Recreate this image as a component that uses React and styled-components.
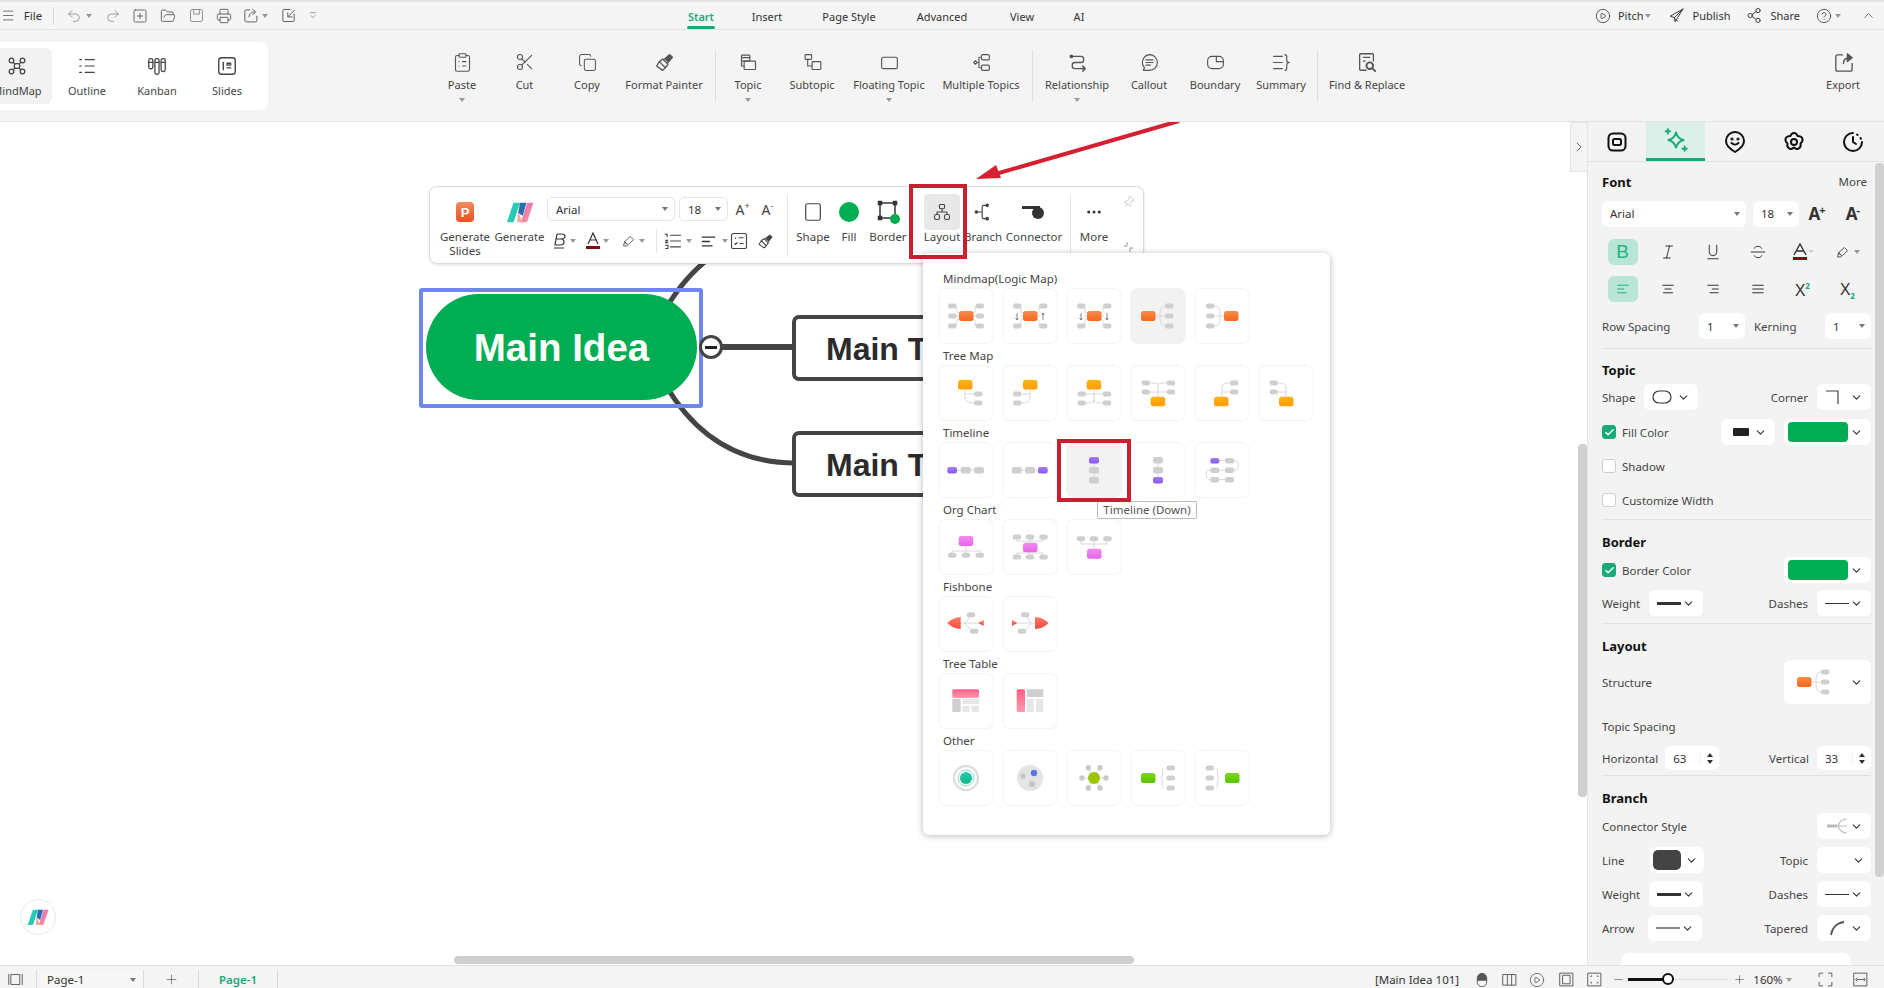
import React from "react";
import styled, { createGlobalStyle } from "styled-components";
import { Undo2, Redo2, SquarePlus, FolderOpen, Printer, CirclePlay, CircleHelp, ChevronUp, ChevronRight, ChevronDown, Scissors, Copy, ClipboardList, Plus, Minus, Check, Pin, Ellipsis } from "lucide-react";

const FONT = `"Noto Sans", "Open Sans", Arial, sans-serif`;
const GREEN = "#1aa97a";
const Global = createGlobalStyle`
  html, body { margin: 0; padding: 0; background: #fff; }
  * { box-sizing: border-box; }
  body { font-family: ${FONT}; font-size: 11.5px; color: #444; }
`;

const Page = styled.div`width:1884px;height:988px;display:flex;flex-direction:column;overflow:hidden;background:#fff;`;

/* ---------- title bar ---------- */
const TitleBar = styled.header`flex:none;height:30px;display:flex;align-items:center;background:#f5f5f5;border-top:2px solid #e3e3e3;border-bottom:1px solid #e4e4e4;`;
const QuickBar = styled.div`width:671px;flex:none;display:flex;align-items:center;color:#555;`;
const Slot = styled.span`flex:none;width:${p=>p.$w||28}px;margin-left:${p=>p.$ml||0}px;display:inline-flex;align-items:center;justify-content:center;color:${p=>p.$c||"#555"};`;
const FileLabel = styled.span`font-size:11.5px;color:#333;width:28px;margin-left:3px;text-align:center;`;
const TinySep = styled.span`flex:none;width:1px;height:18px;background:#d9d9d9;margin:0 ${p=>p.$m||0}px;`;
const Caret = styled.span`display:inline-block;flex:none;width:0;height:0;border-left:3px solid transparent;border-right:3px solid transparent;border-top:4px solid ${p=>p.$c||"#999"};margin-left:${p=>p.$ml||0}px;`;
const Tabs = styled.nav`display:flex;align-items:stretch;height:27px;`;
const Tab = styled.span`width:${p=>p.$w}px;position:relative;display:flex;align-items:center;justify-content:center;padding-top:1px;font-size:11px;color:${p=>p.$on?GREEN:"#333"};font-weight:${p=>p.$on?600:400};
  ${p=>p.$on?`&::after{content:"";position:absolute;left:16px;right:16px;bottom:0;height:3px;border-radius:2px;background:${GREEN};}`:""}`;
const TopRight = styled.div`margin-left:auto;display:flex;align-items:center;padding-right:8px;`;
const TopAction = styled.span`display:flex;align-items:center;gap:${p=>p.$gap||7}px;margin-left:${p=>p.$ml||0}px;font-size:11px;color:#333;`;

/* ---------- ribbon ---------- */
const Ribbon = styled.div`flex:none;height:92px;display:flex;background:#f4f4f4;border-bottom:1px solid #e2e2e2;padding-right:16px;`;
const ViewCard = styled.div`flex:none;width:268px;height:68px;margin-top:12px;background:#fff;border-radius:0 8px 8px 0;display:flex;align-items:center;overflow:hidden;padding-right:6px;`;
const ViewItem = styled.div`flex:none;width:70px;height:56px;margin-left:${p=>p.$ml||0}px;border-radius:6px;background:${p=>p.$on?"#f2f2f2":"transparent"};display:flex;flex-direction:column;align-items:center;justify-content:space-between;padding:7px 0 6px;color:#444;font-size:11px;white-space:nowrap;`;
const RibbonGroup = styled.div`display:flex;margin-left:163px;flex:1;`;
const RibbonItem = styled.div`flex:none;width:${p=>p.$w}px;display:flex;flex-direction:column;align-items:center;padding-top:21px;color:#444;white-space:nowrap;font-size:11px;`;
const RibbonIcon = styled.div`height:22px;display:flex;align-items:center;justify-content:center;color:#555;`;
const RibbonLabel = styled.div`margin-top:4px;line-height:16px;`;
const RibbonCaret = styled.div`margin-top:1px;line-height:8px;`;
const RibbonSep = styled.div`flex:none;width:1px;height:52px;margin:20px ${p=>p.$r||2}px 0 ${p=>p.$l||2}px;background:#dedede;`;
const Push = styled.div`flex:1;`;

/* ---------- main ---------- */
const Main = styled.div`flex:1;min-height:0;display:flex;`;
const Canvas = styled.main`flex:1;position:relative;overflow:hidden;background:#fff;`;
const Links = styled.svg`position:absolute;left:0;top:0;`;
const Pill = styled.div`position:absolute;left:426px;top:172px;width:271px;height:106px;padding-top:2px;border-radius:53px;background:#00ad52;display:flex;align-items:center;justify-content:center;color:#fff;font:bold 38.5px "Liberation Sans",Arial,sans-serif;`;
const Selection = styled.div`position:absolute;left:419px;top:166px;width:284px;height:120px;border:4px solid #6d87ee;border-radius:3px;`;
const TopicNode = styled.div`position:absolute;left:792px;top:${p=>p.$top}px;width:260px;height:${p=>p.$h||65}px;border:4px solid #444;border-radius:7px;background:#fff;display:flex;align-items:center;padding:2px 0 0 30px;color:#2b2b2b;font:bold 32px "Liberation Sans",Arial,sans-serif;white-space:nowrap;`;
const Collapse = styled.div`position:absolute;left:699px;top:213px;width:24px;height:24px;border:3.5px solid #444;border-radius:50%;background:#fff;display:flex;align-items:center;justify-content:center;&::after{content:"";width:12px;height:3px;background:#222;}`;

const Toolbar = styled.div`position:absolute;left:429px;top:64px;width:715px;height:78px;background:#fff;border:1px solid #dcdcdc;border-radius:8px;box-shadow:0 1px 3px rgba(0,0,0,.12);display:flex;padding:7px 0 0 6px;`;
const ToolItem = styled.div`flex:none;width:${p=>p.$w}px;margin-left:${p=>p.$ml||0}px;display:flex;flex-direction:column;align-items:center;text-align:center;color:#444;font-size:11.5px;line-height:14px;white-space:nowrap;`;
const ToolIcon = styled.div`width:36px;height:36px;flex:none;display:flex;align-items:center;justify-content:center;border-radius:4px;background:${p=>p.$on?"#e8e8e8":"transparent"};color:#444;`;
const FontCol = styled.div`flex:none;width:238px;margin-left:2px;padding-top:3px;display:flex;flex-direction:column;gap:8px;`;
const FontRow = styled.div`display:flex;align-items:center;height:24px;`;
const ToolSelect = styled.div`flex:none;width:${p=>p.$w}px;margin-right:${p=>p.$mr||0}px;height:24px;border:1px solid #e6e6e6;border-radius:5px;display:flex;align-items:center;justify-content:space-between;padding:0 6px 0 8px;font-size:11.5px;color:#333;`;
const MiniGlyph = styled.span`flex:none;width:${p=>p.$w}px;margin-left:${p=>p.$ml||0}px;display:inline-flex;align-items:center;justify-content:center;gap:3px;color:#444;`;
const SuperA = styled.span`flex:none;width:25px;text-align:center;font-size:14px;color:#444;& sup{font-size:9px;line-height:0;}`;
const BigA = styled.span`flex:none;width:${p=>p.$w}px;display:inline-flex;align-items:flex-start;justify-content:center;font-size:17px;font-weight:700;line-height:20px;color:#333;& sup{font-size:11px;line-height:12px;margin-left:-1px;}`;
const ToolSep = styled.div`flex:none;width:1px;height:${p=>p.$h||60}px;margin:${p=>p.$mt||1}px ${p=>p.$r||2}px 0 ${p=>p.$l||2}px;background:#e3e3e3;`;
const RowSep = styled.span`flex:none;width:1px;height:24px;background:#e3e3e3;margin-left:${p=>p.$m||3}px;`;
const PinMark = styled.div`position:absolute;right:8px;top:9px;color:#bbb;& svg{transform:rotate(35deg);}`;
const ResizeMark = styled.div`position:absolute;right:9px;bottom:11px;color:#999;line-height:0;`;

const Popover = styled.section`position:absolute;left:923px;top:131px;width:407px;height:582px;background:#fff;border-radius:6px;box-shadow:0 1px 7px rgba(0,0,0,.28);padding:16px 0 0 15px;`;
const SectionTitle = styled.div`height:19px;line-height:19px;margin-left:5px;font-size:11.5px;color:#444;`;
const TileRow = styled.div`display:flex;gap:8px;margin-bottom:2px;`;
const Tile = styled.div`flex:none;width:56px;height:56px;border-radius:8px;border:1px solid ${p=>p.$on?"#f2f2f2":"#f4f4f4"};background:${p=>p.$on?"#f2f2f2":"#fff"};& svg{display:block;margin:-1px;}`;
const RedBox = styled.div`position:absolute;left:${p=>p.$l}px;top:${p=>p.$t}px;width:${p=>p.$w}px;height:${p=>p.$h}px;border:4px solid #c8202f;`;
const Tooltip = styled.div`position:absolute;left:1097px;top:379px;width:100px;height:18px;background:#fff;border:1px solid #bdbdbd;border-radius:1px;font-size:11.5px;line-height:16px;text-align:center;color:#555;white-space:nowrap;`;
const ArrowSvg = styled.svg`position:absolute;left:960px;top:-4px;`;
const LogoBubble = styled.div`position:absolute;left:20px;top:777px;width:36px;height:36px;border:1px solid #ebebeb;border-radius:50%;background:#fff;display:flex;align-items:center;justify-content:center;`;
const SideToggle = styled.div`position:absolute;right:0;top:0;width:17px;height:50px;background:#f4f4f4;border:1px solid #e6e6e6;border-right:0;display:flex;align-items:center;justify-content:center;color:#555;`;
const VThumb = styled.div`position:absolute;right:0;top:322px;width:9px;height:353px;background:#d0d0d0;border-radius:4px;`;
const HThumb = styled.div`position:absolute;left:454px;top:834px;width:680px;height:8px;background:#cfcfcf;border-radius:4px;`;
const HiddenDefs = styled.svg`position:absolute;width:0;height:0;`;

/* ---------- right panel ---------- */
const Panel = styled.aside`flex:none;width:297px;position:relative;background:#f3f3f3;border-left:1px solid #e4e4e4;display:flex;flex-direction:column;overflow:hidden;`;
const PanelTabs = styled.div`flex:none;height:40px;display:flex;margin-left:-1px;border-bottom:1px solid #e2e2e2;`;
const PanelTab = styled.div`flex:none;width:${p=>p.$w}px;display:flex;align-items:center;justify-content:center;background:${p=>p.$on?"#dcefe9":"transparent"};border-bottom:${p=>p.$on?`3px solid ${GREEN}`:"0"};`;
const PanelBody = styled.div`flex:1;padding:0 0 0 14px;width:283px;overflow:hidden;`;
const PanelThumb = styled.div`position:absolute;right:0;top:41px;width:9px;height:714px;background:#d0d0d0;border-radius:4px;`;
const Heading = styled.div`height:18px;line-height:20px;margin-top:${p=>p.$mt||0}px;display:flex;justify-content:space-between;font-size:13px;font-weight:700;color:#111;`;
const More = styled.span`font-size:11.5px;font-weight:400;color:#444;margin-right:4px;`;
const Row = styled.div`height:${p=>p.$h||26}px;margin-top:${p=>p.$mt||0}px;display:flex;align-items:center;justify-content:space-between;font-size:11.5px;color:#444;white-space:nowrap;`;
const RowSide = styled.div`display:flex;align-items:center;gap:${p=>p.$gap||6}px;`;
const Field = styled.div`flex:none;width:${p=>p.$w}px;height:${p=>p.$h||26}px;margin-left:${p=>p.$ml||0}px;background:#fff;border-radius:6px;display:flex;align-items:center;justify-content:space-between;padding:0 ${p=>p.$pr||8}px 0 ${p=>p.$pl||8}px;font-size:11.5px;color:#333;`;
const Swatch = styled.span`flex:none;width:${p=>p.$w}px;height:${p=>p.$h}px;border-radius:${p=>p.$r||4}px;background:${p=>p.$c};`;
const LineSample = styled.span`flex:none;width:24px;height:${p=>p.$t}px;background:${p=>p.$c||"#333"};`;
const FormatGrid = styled.div`display:grid;grid-template-columns:repeat(6,45px);margin:${p=>p.$mt||0}px 0 0 -2px;height:26px;`;
const FormatBtn = styled.div`justify-self:center;width:30px;height:26px;border-radius:6px;background:${p=>p.$on?"#b9e5d6":"transparent"};display:flex;align-items:center;justify-content:center;color:${p=>p.$on?"#23b384":"#333"};`;
const BoldB = styled.span`font:19px "Liberation Sans",Arial,sans-serif;`;
const Script = styled.span`font-size:17px;& sup,& sub{font-size:8px;font-weight:700;color:${GREEN};}`;
const Rule = styled.div`height:1px;background:#e0e0e0;margin-top:${p=>p.$mt||0}px;`;
const Box = styled.span`flex:none;width:14px;height:14px;border-radius:3px;display:inline-flex;align-items:center;justify-content:center;background:${p=>p.$on?GREEN:"#fff"};border:1px solid ${p=>p.$on?GREEN:"#cfcfcf"};color:#fff;`;
const Spinner = styled.span`display:flex;flex-direction:column;gap:3px;padding-left:6px;border-left:1px solid #eee;`;
const SpinUp = styled.i`display:block;width:0;height:0;border-left:3px solid transparent;border-right:3px solid transparent;border-bottom:4px solid #333;`;
const SpinDown = styled.i`display:block;width:0;height:0;border-left:3px solid transparent;border-right:3px solid transparent;border-top:4px solid #333;`;
const PreviewCard = styled.div`width:230px;height:40px;margin:12px 0 0 19px;background:#fff;border-radius:8px 8px 0 0;`;

/* ---------- status bar ---------- */
const StatusBar = styled.footer`flex:none;height:23px;display:flex;align-items:stretch;background:#f4f4f4;border-top:1px solid #e0e0e0;font-size:11.5px;color:#333;overflow:hidden;padding-right:10px;`;
const StatusSlot = styled.div`flex:none;width:${p=>p.$w}px;margin-left:${p=>p.$ml||0}px;display:flex;align-items:center;justify-content:center;padding-top:5px;color:#555;`;
const StatusSep = styled.div`flex:none;width:1px;margin-top:4px;margin-left:${p=>p.$ml||0}px;background:#d9d9d9;`;
const PageTab = styled.div`flex:none;width:103px;margin-left:3px;margin-top:4px;padding:1px 7px 0;display:flex;align-items:center;justify-content:space-between;background:#f7f7f7;color:#333;font-size:11.5px;`;
const ActivePage = styled.div`flex:none;width:78px;display:flex;align-items:center;justify-content:center;padding-top:5px;color:${GREEN};font-weight:600;font-size:11.5px;`;
const StatusText = styled.div`flex:none;width:${p=>p.$w}px;margin-left:${p=>p.$ml||0}px;padding-top:5px;display:flex;align-items:center;justify-content:center;white-space:nowrap;`;
const Slider = styled.div`flex:none;width:100px;position:relative;margin-top:5px;`;
const SliderTrack = styled.div`position:absolute;left:0;right:0;top:8px;height:1px;background:#dcdcdc;`;
const SliderFill = styled.div`position:absolute;left:0;top:7px;width:40px;height:3px;background:#111;`;
const SliderKnob = styled.div`position:absolute;left:34px;top:2px;width:12px;height:12px;border:2.5px solid #111;border-radius:50%;background:#fff;`;

/* ---------- drawn icons ---------- */
const Ico = ({ s = 20, sw = 1.3, c = "currentColor", children }) => (
  <svg width={s} height={s} viewBox="0 0 24 24" fill="none" stroke={c} strokeWidth={sw} strokeLinecap="round" strokeLinejoin="round">{children}</svg>
);
const Hamburger = () => <Ico s={15}><path d="M4 5h15M4 12h15M4 19h15" /></Ico>;
const SaveIco = () => <Ico s={17} c="#888"><rect x="3.5" y="3.5" width="17" height="17" rx="2.5" /><path d="M8 3.5V10h8V3.5" /></Ico>;
const ShareBox = () => <Ico s={17}><path d="M11 4H6a2 2 0 0 0-2 2v13a2 2 0 0 0 2 2h13a2 2 0 0 0 2-2v-6" /><path d="M10 14c0-5 3-7 8-7M15 3l4 4-4 4" /></Ico>;
const CheckBoxOut = () => <Ico s={17}><path d="M20 10v9a1.5 1.5 0 0 1-1.5 1.5h-13A1.5 1.5 0 0 1 4 19V5a1.5 1.5 0 0 1 1.5-1.5H14" /><path d="M20 5l-8 8M11 8v6h6" /></Ico>;
const Overflow = () => <Ico s={12}><path d="M6 4h12M7 11l5 5 5-5" /></Ico>;
const Plane = () => <Ico s={17}><path d="M21 3L3 13l6 2 1 6 11-18zM9 15l12-12M14 20l-4-3" /></Ico>;
const ShareNodes = () => <Ico s={17}><circle cx="6" cy="12" r="3" /><circle cx="17" cy="5" r="3" /><circle cx="17" cy="19" r="3" /><path d="M8.7 10.6l5.6-4M8.7 13.4l5.6 4" /></Ico>;

const MindIco = () => <Ico s={22} sw={1.4}><circle cx="6" cy="6" r="2.5"/><circle cx="18" cy="6" r="2.5"/><circle cx="6" cy="18" r="2.5"/><circle cx="18" cy="18" r="2.5"/><rect x="9" y="9.5" width="6" height="5" rx="2"/><path d="M8 8l1.5 2M16 8l-1.5 2M8 16l1.5-2M16 16l-1.5-2"/></Ico>;
const OutlineIco = () => <Ico s={22}><path d="M4 5h2M10 5h10M4 12h2M10 12h10M4 19h2M10 19h10"/></Ico>;
const KanbanIco = () => <Ico s={22} sw={1.4}><rect x="3" y="4" width="4.5" height="11" rx="2"/><rect x="9.7" y="4" width="4.5" height="17" rx="2"/><rect x="16.5" y="4" width="4.5" height="14" rx="2"/><path d="M3 8h4.5M9.7 8h4.5M16.5 8H21"/></Ico>;
const SlidesIco = () => <Ico s={22} sw={1.5}><rect x="3" y="3" width="18" height="18" rx="3"/><path d="M8 8v8" /><path d="M12 9h4v2h-4zM12 14h4" /></Ico>;
const BrushIco = ({ s = 21 }) => <Ico s={s} sw={1.5}><path d="M6 11l7 7-3 3-7-5zM6 11l4-3 6 6-3 4" /><path d="M12 8l6-5 3 3-5 6" fill="currentColor" /></Ico>;
const TopicIco = () => <Ico s={21}><rect x="4" y="3.500" width="9.500" height="7" rx="1" /><path d="M4 6.500h9.500M4 6.500V16h3" /><rect x="7" y="10.500" width="13" height="9.500" rx="1" /></Ico>;
const SubtopicIco = () => <Ico s={21}><rect x="3.5" y="3" width="7.5" height="5.5" rx="1"/><path d="M6.5 8.5V16h5"/><rect x="11.5" y="11" width="10" height="9" rx="1"/></Ico>;
const FloatIco = () => <Ico s={21}><rect x="3" y="6" width="18" height="13" rx="2"/></Ico>;
const MultiIco = () => <Ico s={21}><rect x="12" y="3" width="9" height="6" rx="1.5"/><rect x="12" y="15" width="9" height="6" rx="1.5"/><path d="M12 6h-2a1 1 0 0 0-1 1v10a1 1 0 0 0 1 1h2M9 12H7"/><path d="M3 12l2-2 2 2-2 2z"/></Ico>;
const RelIco = () => <Ico s={21} sw={1.5}><circle cx="5" cy="5" r="1.4" fill="currentColor"/><path d="M7 5h9a3 3 0 0 1 3 3v1a3 3 0 0 1-3 3H9a3 3 0 0 0-3 3v1a3 3 0 0 0 3 3h10"/><path d="M18 16l3 3-3 3" fill="currentColor"/></Ico>;
const CalloutIco = () => <Ico s={21}><path d="M12 3a9 9 0 0 1 0 18H5l1.3-3A9 9 0 0 1 12 3z"/><path d="M8 9h8M8 12h8M8 15h5"/></Ico>;
const BoundaryIco = () => <Ico s={21}><rect x="3" y="5" width="18" height="14" rx="5"/><path d="M13 5v6h8"/></Ico>;
const SummaryIco = () => <Ico s={21}><path d="M3 5h10M3 12h10M3 19h10M16 3c2 0 2 1 2 3v3c0 2 1 3 3 3-2 0-3 1-3 3v3c0 2 0 3-2 3"/></Ico>;
const FindIco = () => <Ico s={22} sw={1.4}><path d="M11 21H5a1 1 0 0 1-1-1V4a1 1 0 0 1 1-1h13a1 1 0 0 1 1 1v7"/><path d="M8 7h7M8 11h2"/><circle cx="15" cy="16" r="3.6" strokeWidth="2"/><path d="M18 19l3 3" strokeWidth="2"/></Ico>;
const ExportIco = () => <Ico s={23} sw={1.4}><path d="M11 4H6a2 2 0 0 0-2 2v13a2 2 0 0 0 2 2h13a2 2 0 0 0 2-2v-6"/><path d="M12 13c0-4 2-6 7-6" /><path d="M16 3l5 4-5 4z" fill="currentColor"/></Ico>;

const LogoM = ({ s = 26 }) => (
  <svg width={s} height={s} viewBox="0 0 30 30">
    <defs>
      <linearGradient id={`lg-${s}`} x1="0" y1="0" x2="1" y2="1"><stop offset="0" stopColor="#1fd5c9" /><stop offset="1" stopColor="#29c3a0" /></linearGradient>
      <linearGradient id={`lp-${s}`} x1="0" y1="0" x2="1" y2="1"><stop offset="0" stopColor="#ee4fb4" /><stop offset="1" stopColor="#f3b49a" /></linearGradient>
    </defs>
    <path d="M8 5h7L8 26H1z" fill={`url(#lg-${s})`} />
    <path d="M15 5h7l-4 14-5-3z" fill="#2b6fb0" />
    <path d="M23 5h6.500l-7 21H16z" fill={`url(#lp-${s})`} />
    <path d="M13 15l5 11h-6z" fill="#f3a8a0" />
  </svg>
);

const TabFrame = () => <Ico s={24} sw={2} c="#111"><rect x="3.5" y="3.5" width="17" height="17" rx="4.5"/><rect x="8" y="9" width="8" height="6" rx="1.5"/></Ico>;
const TabSpark = () => <Ico s={26} sw={1.8} c={GREEN}><path d="M12 5c1 4 3 6 7 7-4 1-6 3-7 7-1-4-3-6-7-7 4-1 6-3 7-7z"/><path d="M4.5 2v4M2.5 4h4M20 18v4M18 20h4"/></Ico>;
const TabFace = () => <Ico s={24} sw={2} c="#111"><path d="M12 22c-5-3-9-6-9-11a9 9 0 0 1 18 0c0 5-4 8-9 11z"/><circle cx="9" cy="9" r=".6" fill="#111"/><circle cx="15" cy="9" r=".6" fill="#111"/><path d="M8.5 13c2 2 5 2 7 0"/></Ico>;
const TabFlower = () => <Ico s={24} sw={2} c="#111"><path d="M12 3c2 0 3 1.5 3.5 3 2 0 4.5 1 5 3 .4 2-.8 3.5-2 4.5.5 2 0 4-1.8 5-2 1-3.700 0-4.700-1-1 1-2.700 2-4.700 1-1.800-1-2.300-3-1.800-5-1.200-1-2.400-2.500-2-4.500.5-2 3-3 5-3C9 4.500 10 3 12 3z"/><circle cx="12" cy="12" r="3"/></Ico>;
const TabClock = () => <Ico s={24} sw={2} c="#111"><path d="M12 3a9 9 0 1 0 9 9" /><path d="M16 4.500l.6.4M19.500 8l.4.8M12 7v5l3 2" /></Ico>;
const Italic = () => <Ico s={18}><path d="M9 4h9M6 20h9M14 4l-4 16"/></Ico>;
const AlignIco = ({ k, c = "#333", s = 18 }) => {
  const d = { l: "M5 7h14M5 12h8M5 17h11", c: "M5 7h14M8 12h8M6 17h12", r: "M5 7h14M11 12h8M8 17h11", j: "M5 7h14M5 12h14M5 17h14" }[k];
  return <Ico s={s} sw={1.6} c={c}><path d={d} /></Ico>;
};
const Highlighter = () => <Ico s={15}><path d="M8 15l-2-3L15 4l5 5-8 8-4-2z"/><path d="M6 12l-2 7h6"/></Ico>;
const Chevron = () => <ChevronDown size={13} strokeWidth={2} color="#333" />;

/* ---------- layout thumbnails ---------- */
const G = "#cfcfcf", W = "#e6e6e6", LN = "#d8d8d8";
const g = (x, cy, w = 8.4) => [x, cy - 2.5, w, 5, G];
const Defs = () => (
  <HiddenDefs>
    <defs>
      {[["gO","#f98e48","#f2671d"],["gY","#ffb01f","#ff9d00"],["gV","#a47bf5","#8858ea"],["gK","#f18bf2","#e765e8"],["gR","#ff7a68","#fb4a3c"],["gP","#ff5f84","#ff9aae"],["gL","#7ad71a","#59c400"],["gT","#24c9b4","#12b98a"]].map(([id,a,b]) => (
        <linearGradient key={id} id={id} x1="0" y1="0" x2="0" y2="1"><stop offset="0" stopColor={a}/><stop offset="1" stopColor={b}/></linearGradient>
      ))}
    </defs>
  </HiddenDefs>
);
const Mini = ({ d, s = 56, vb = "0 0 56 56" }) => (
  <svg width={s} height={s} viewBox={vb} fill="none">
    {(d.l || []).map((p, i) => <path key={i} d={p} stroke={LN} strokeWidth="1" />)}
    {(d.c || []).map(([x, y, r, f, st, sw], i) => <circle key={i} cx={x} cy={y} r={r} fill={f} stroke={st} strokeWidth={sw} />)}
    {(d.r || []).map(([x, y, w, h, f, rx], i) => <rect key={i} x={x} y={y} width={w} height={h} rx={rx ?? 2} fill={f} />)}
    {(d.p || []).map(([p, f], i) => <path key={i} d={p} fill={f} />)}
    {(d.a || []).map((p, i) => <path key={i} d={p} stroke="#777" strokeWidth=".9" />)}
  </svg>
);
const O = "url(#gO)", Y = "url(#gY)", V = "url(#gV)", K = "url(#gK)", R = "url(#gR)", P = "url(#gP)", LG = "url(#gL)", T = "url(#gT)";
const mapL = ["M21 25c-3 0-2-7-3-7M21 28h-3M21 31c-3 0-2 7-3 7M35 25c3 0 2-7 3-7M35 28h3M35 31c3 0 2 7 3 7"];
const rightTree = { l: ["M25 28h10M30 28c0-4 0-10 5-10M30 28c0 4 0 10 5 10"], r: [[11, 23, 14.5, 10, O, 2.5], g(35,18), g(35,28), g(35,38)] };
const SECTIONS = [
  { t: "Mindmap(Logic Map)", on: 3, items: [
    { l: mapL, r: [g(10,18),g(10,28),g(10,38),g(37.600,18),g(37.600,28),g(37.600,38),[21,23,14.5,10,O,2.5]] },
    { l: mapL, r: [g(11,18),g(11,38),g(37,18),g(37,38),[21,23,14.5,10,O,2.5]], a: ["M15 25v7M13.500 30l1.500 2 1.500-2M41 32v-7M39.500 27l1.500-2 1.500 2"] },
    { l: mapL, r: [g(11,18),g(11,38),g(37,18),g(37,38),[21,23,14.5,10,O,2.5]], a: ["M15 25v7M13.500 30l1.500 2 1.500-2M41 25v7M39.500 30l1.500 2 1.500-2"] },
    rightTree,
    { l: ["M21 28h9M26 28c0-4 0-10-5-10M26 28c0 4 0 10-5 10"], r: [g(12,18),g(12,28),g(12,38),[30,23,14.5,10,O,2.5]] },
  ]},
  { t: "Tree Map", items: [
    { l: ["M27 25v8c0 4 3 5 9 5M27 28c0 1 4 1 9 1"], r: [[20,15,14.5,9.500,Y,2.5],g(36,29),g(36,38)] },
    { l: ["M28 25v8c0 4-3 5-8 5M28 29h-8"], r: [[21,15,14.5,9.500,Y,2.5],g(11,29),g(11,38)] },
    { l: ["M28 25v13M28 29h-8M28 29h9M28 34c0 4-4 4-8 4M28 34c0 4 4 4 9 4"], r: [[20.700,15,14.5,9.500,Y,2.5],g(11.500,29),g(11.500,38),g(36.700,29),g(36.700,38)] },
    { l: ["M28 32V20c0-2-4-2-8-2M28 20c0-2 4-2 9-2M28 27h-8M28 27h9"], r: [g(11.500,18),g(11.500,27),g(36.700,18),g(36.700,27),[20.700,31.700,14.500,9.500,Y,2.5]] },
    { l: ["M28 32V22c0-3 3-4 8-4M28 27h8"], r: [g(36,18),g(36,27),[20,31.700,14.500,9.500,Y,2.5]] },
    { l: ["M28 32V22c0-3-3-4-8-4M28 27h-8"], r: [g(11.500,18),g(11.500,27),[21,31.700,14.500,9.500,Y,2.5]] },
  ]},
  { t: "Timeline", on: 2, items: [
    { l: ["M19 28h18"], r: [[9.300,25,9.700,6.500,V],[22.700,25,10,6.500,G],[36,25,10,6.500,G]] },
    { l: ["M19 28h18"], r: [[9.700,25,10,6.500,G],[23,25,10,6.500,G],[36,25,9.700,6.500,V]] },
    { l: ["M28 20v18"], r: [[23,15,10,6.500,V],[23,25,10,6.500,G],[23,35,10,6.500,G]] },
    { l: ["M28 20v18"], r: [[23,15,10,6.500,G],[23,25,10,6.500,G],[23,35,10,6.500,V]] },
    { l: ["M25 18.700h6M40 18.700c6 0 6 9.600 0 9.600M25 28.300h6M16 28.300c-5 0-5 9.300 0 9.300M25 37.600h6"], r: [[16.300,16,9,5.500,V],[31,16,9,5.500,G],[16.300,25.500,9,5.500,G],[31,25.500,9,5.500,G],[16.300,35,9,5.500,G],[31,35,9,5.500,G]] },
  ]},
  { t: "Org Chart", items: [
    { l: ["M28 27v5M14 34v-2h28v2M28 32v2"], r: [[20.700,17,14.500,10,K,2.5],g(10,36.300),g(23.800,36.300),g(37.500,36.300)] },
    { l: ["M28 20v18M15 20v2h26v-2M15 36v-2h26v2"], r: [g(10.700,18),g(23.800,18),g(37.300,18),[21,23.700,14.500,9.500,K,2.500],g(10.700,38),g(23.800,38),g(37.300,38)] },
    { l: ["M28 22v8M15 22v3h26v-3"], r: [g(10.700,19.700),g(23.800,19.700),g(37.300,19.700),[21,29.700,14.500,10,K,2.500]] },
  ]},
  { t: "Fishbone", items: [
    { l: ["M22 27h19M27 27l6-7M27 27l6 7"], r: [g(28.700,18.700),g(32,35.300)], p: [["M22.700 21v12C18 33 12 30 9.300 27 12 24 18 21 22.700 21z",R],["M45.700 24v6L40 27z",R]] },
    { l: ["M15 27h19M29 27l-5-7M29 27l-5 7"], r: [g(19,18.700),g(15.700,35.300)], p: [["M33 21v12c5 0 11-3 13.500-6C44 24 38 21 33 21z",R],["M10 24v6l5.500-3z",R]] },
  ]},
  { t: "Tree Table", items: [
    { r: [[14.300,16.300,26.700,8.700,P,1.5],[14.300,26,8.400,13,G,1],[24.500,26,16.500,5,W,0],[24.500,33,7,6,W,0],[33.500,33,7.500,6,W,0]] },
    { r: [[14.700,16.300,8.300,22.700,P,1.5],[24.700,16.300,16.600,7.700,G,1],[24.700,26,7,13,W,0],[34,26,7.300,13,W,0]] },
  ]},
  { t: "Other", items: [
    { c: [[28,28,12,"#fff","#dfdfdf",2.5],[28,28,8,"#fff","#8fdcc8",1],[28,28,6,T,"none"]] },
    { c: [[28,28,13,"#e4e4e4"],[32,23,3.200,"#5b78e8"],[21,26,2.700,"#c4c4c4"],[30,34,3,"#c4c4c4"]] },
    { l: ["M16 28h24M22 18l12 20M34 18L22 38"], c: [[22.300,17.700,2.700,"#c8c8c8"],[34,17.700,2.700,"#c8c8c8"],[16,28,2.700,"#c8c8c8"],[40,28,2.700,"#c8c8c8"],[22.300,38,2.700,"#c8c8c8"],[34,38,2.700,"#c8c8c8"],[28,28,6,"#9cc400"]] },
    { l: ["M34 18c-2 0-1.500 3-1.500 6 0 3-2 4-2 4s2 1 2 4c0 3-.5 6 1.500 6"], r: [[11,23,14.500,10,LG,2.500],g(36.500,18),g(36.500,28),g(36.500,38)] },
    { l: ["M22 18c2 0 1.500 3 1.500 6 0 3 2 4 2 4s-2 1-2 4c0 3 .5 6-1.500 6"], r: [g(11.500,18),g(11.500,28),g(11.500,38),[31,23,14.500,10,LG,2.500]] },
  ]},
];

const RibbonEntry = ({ w, label, icon, caret }) => (
  <RibbonItem $w={w}>
    <RibbonIcon>{icon}</RibbonIcon>
    <RibbonLabel>{label}</RibbonLabel>
    {caret && <RibbonCaret><Caret /></RibbonCaret>}
  </RibbonItem>
);
const Tool = ({ w, ml, label, icon, on }) => (
  <ToolItem $w={w} $ml={ml}><ToolIcon $on={on}>{icon}</ToolIcon><div>{label}</div></ToolItem>
);
const Sel = ({ w, h, ml, pl, pr, children, caret }) => (
  <Field $w={w} $h={h} $ml={ml} $pl={pl} $pr={pr}>{children}{caret ? <Caret $c="#777" /> : <Chevron />}</Field>
);

export default function App() {
  return (
    <Page>
      <Global />
      <Defs />
      <TitleBar>
        <QuickBar>
          <Slot $w={16}><Hamburger /></Slot>
          <FileLabel>File</FileLabel>
          <TinySep $m={6} />
          <Slot $w={26} $ml={1}><Undo2 size={16} strokeWidth={1.2} color="#888" /></Slot>
          <Caret $ml={-1} />
          <Slot $w={26} $ml={8}><Redo2 size={16} strokeWidth={1.2} color="#888" /></Slot>
          <Slot $w={28}><SquarePlus size={16} strokeWidth={1.3} /></Slot>
          <Slot $w={28}><FolderOpen size={16} strokeWidth={1.3} /></Slot>
          <Slot $w={28}><SaveIco /></Slot>
          <Slot $w={28}><Printer size={16} strokeWidth={1.3} /></Slot>
          <Slot $w={24}><ShareBox /></Slot>
          <Caret />
          <Slot $w={40}><CheckBoxOut /></Slot>
          <Slot $w={10}><Overflow /></Slot>
        </QuickBar>
        <Tabs>
          <Tab $w={60} $on>Start</Tab>
          <Tab $w={72}>Insert</Tab>
          <Tab $w={92}>Page Style</Tab>
          <Tab $w={94}>Advanced</Tab>
          <Tab $w={66}>View</Tab>
          <Tab $w={48}>AI</Tab>
        </Tabs>
        <TopRight>
          <TopAction><CirclePlay size={16} strokeWidth={1.2} />Pitch<Caret $ml={-5} /></TopAction>
          <TopAction $ml={17}><Plane />Publish</TopAction>
          <TopAction $ml={16}><ShareNodes />Share</TopAction>
          <TopAction $ml={16} $gap={3}><CircleHelp size={16} strokeWidth={1.2} /><Caret /></TopAction>
          <TopAction $ml={20}><ChevronUp size={15} strokeWidth={1.1} /></TopAction>
        </TopRight>
      </TitleBar>

      <Ribbon>
        <ViewCard>
          <ViewItem $on $ml={-18}><MindIco />MindMap</ViewItem>
          <ViewItem><OutlineIco />Outline</ViewItem>
          <ViewItem><KanbanIco />Kanban</ViewItem>
          <ViewItem><SlidesIco />Slides</ViewItem>
        </ViewCard>
        <RibbonGroup>
          <RibbonEntry w={62} label="Paste" caret icon={<ClipboardList size={21} strokeWidth={1.3} />} />
          <RibbonEntry w={63} label="Cut" icon={<Scissors size={20} strokeWidth={1.3} />} />
          <RibbonEntry w={62} label="Copy" icon={<Copy size={19} strokeWidth={1.3} />} />
          <RibbonEntry w={92} label="Format Painter" icon={<BrushIco />} />
          <RibbonSep $l={5} $r={2} />
          <RibbonEntry w={60} label="Topic" caret icon={<TopicIco />} />
          <RibbonEntry w={68} label="Subtopic" icon={<SubtopicIco />} />
          <RibbonEntry w={86} label="Floating Topic" caret icon={<FloatIco />} />
          <RibbonEntry w={98} label="Multiple Topics" icon={<MultiIco />} />
          <RibbonSep $l={2} $r={2} />
          <RibbonEntry w={84} label="Relationship" caret icon={<RelIco />} />
          <RibbonEntry w={60} label="Callout" icon={<CalloutIco />} />
          <RibbonEntry w={72} label="Boundary" icon={<BoundaryIco />} />
          <RibbonEntry w={60} label="Summary" icon={<SummaryIco />} />
          <RibbonSep $l={6} $r={2} />
          <RibbonEntry w={94} label="Find & Replace" icon={<FindIco />} />
          <Push />
          <RibbonEntry w={50} label="Export" icon={<ExportIco />} />
        </RibbonGroup>
      </Ribbon>

      <Main>
        <Canvas>
          <Links width="1587" height="843" fill="none" stroke="#444" strokeWidth="5">
            <path d="M665 188C690 145 730 109 795 109" />
            <path d="M665 262C690 305 730 341 795 341" />
            <path d="M722 225H795" strokeWidth="6" />
          </Links>
          <TopicNode $top={193} $h={66}>Main Topic</TopicNode>
          <TopicNode $top={309} $h={66}>Main Topic</TopicNode>
          <Pill>Main Idea</Pill>
          <Selection />
          <Collapse />

          <Toolbar>
            <ToolItem $w={58}><ToolIcon><svg width="22" height="24" viewBox="0 0 22 24"><defs><linearGradient id="ppt" x1="0" y1="0" x2="0" y2="1"><stop offset="0" stopColor="#f58a5a"/><stop offset="1" stopColor="#e9501f"/></linearGradient></defs><rect x="2" y="2" width="18" height="20" rx="4" fill="url(#ppt)"/><text x="11" y="17" textAnchor="middle" fontFamily="Liberation Sans" fontWeight="700" fontSize="13" fill="#fff">P</text></svg></ToolIcon><div>Generate<br />Slides</div></ToolItem>
            <Tool w={51} label="Generate" icon={<LogoM s={28} />} />
            <FontCol>
              <FontRow>
                <ToolSelect $w={128} $mr={4}>Arial<Caret $c="#777" /></ToolSelect>
                <ToolSelect $w={49} $mr={2}>18<Caret $c="#777" /></ToolSelect>
                <SuperA>A<sup>+</sup></SuperA>
                <SuperA>A<sup>-</sup></SuperA>
              </FontRow>
              <FontRow>
                <MiniGlyph $w={34}><svg width="14" height="18" viewBox="0 0 14 18" fill="none" stroke="#333" strokeWidth="1.2"><path d="M4 2h5c2 0 3 1 3 2.500S10 7 8 7H3M3 7h5c2 0 3 1 3 3s-2 3-4 3H2L4 2M1 16h10"/></svg><Caret /></MiniGlyph>
                <MiniGlyph $w={32}><svg width="14" height="18" viewBox="0 0 14 18" fill="none"><path d="M2 12L7 1l5 11M4 8h6" stroke="#333" strokeWidth="1.2"/><rect x="0" y="14" width="14" height="3" fill="#7c0b12"/></svg><Caret /></MiniGlyph>
                <MiniGlyph $w={40}><Highlighter /><Caret /></MiniGlyph>
                <RowSep />
                <MiniGlyph $w={40}><Ico s={20}><path d="M9 5h12M9 12h12M9 19h12M3 4h2v3M3 11h3l-3 3h3M3 17h3v4H3"/></Ico><Caret /></MiniGlyph>
                <MiniGlyph $w={32}><AlignIco k="l" s={21} /><Caret /></MiniGlyph>
                <MiniGlyph $w={20}><Ico s={20}><rect x="3" y="3" width="18" height="18" rx="2.500"/><path d="M8 8v1M12 8h5M7 15l1 1 2-2M13 15h4"/></Ico></MiniGlyph>
                <MiniGlyph $w={33}><BrushIco s={17} /></MiniGlyph>
              </FontRow>
            </FontCol>
            <ToolSep />
            <Tool w={46} label="Shape" icon={<Ico s={22} sw={1.3}><rect x="4" y="3" width="16" height="18" rx="2"/></Ico>} />
            <Tool w={26} label="Fill" icon={<svg width="22" height="22"><circle cx="11" cy="11" r="10" fill="#00ad52"/></svg>} />
            <Tool w={52} label="Border" icon={<svg width="24" height="24" viewBox="0 0 24 24" fill="none" stroke="#333" strokeWidth="1.5"><rect x="4" y="3" width="15" height="15" /><rect x="2.500" y="1.500" width="3" height="3" fill="#333"/><rect x="17.500" y="1.500" width="3" height="3" fill="#333"/><rect x="2.500" y="16.500" width="3" height="3" fill="#333"/><circle cx="19" cy="19" r="5" fill="#00ad52" stroke="none"/></svg>} />
            <Tool w={36} ml={10} on label="Layout" icon={<Ico s={20} sw={1.3}><rect x="9" y="3" width="6" height="5" rx="1"/><rect x="3" y="15" width="6" height="6" rx="2"/><rect x="15" y="15" width="6" height="6" rx="2"/><path d="M12 8v4M6 15v-3h12v3"/></Ico>} />
            <Tool w={46} label="Branch" icon={<Ico s={20} sw={1.4}><circle cx="4" cy="12" r="1.500" fill="currentColor"/><circle cx="17" cy="4" r="1.500" fill="currentColor"/><circle cx="17" cy="20" r="1.500" fill="currentColor"/><path d="M5 12h5M15 4h-2a2 2 0 0 0-2 2v12a2 2 0 0 0 2 2h2"/></Ico>} />
            <Tool w={56} label="Connector" icon={<svg width="26" height="22" viewBox="0 0 26 22"><rect x="1" y="5" width="18" height="3" fill="#333"/><circle cx="17" cy="12" r="6" fill="#333"/></svg>} />
            <ToolSep $l={8} $r={0} />
            <Tool w={42} label="More" icon={<Ellipsis size={18} color="#333" />} />
            <PinMark><Pin size={12} strokeWidth={1.3} /></PinMark>
            <ResizeMark><svg width="10" height="10" fill="none" stroke="currentColor"><path d="M0 4h3V0M9 6H6v4"/></svg></ResizeMark>
          </Toolbar>

          <Popover>
            {SECTIONS.map(sec => (
              <div key={sec.t}>
                <SectionTitle>{sec.t}</SectionTitle>
                <TileRow>
                  {sec.items.map((d, i) => <Tile key={i} $on={sec.on === i}><Mini d={d} /></Tile>)}
                </TileRow>
              </div>
            ))}
          </Popover>
          <Tooltip>Timeline (Down)</Tooltip>
          <RedBox $l={909} $t={62} $w={58} $h={75} />
          <RedBox $l={1057} $t={317} $w={74} $h={63} />
          <ArrowSvg width="240" height="70" viewBox="0 0 240 70">
            <path d="M219 3L32 57" stroke="#d42030" strokeWidth="4" />
            <path d="M16 61L36 47 41 60z" fill="#d42030" />
          </ArrowSvg>
          <LogoBubble><LogoM s={22} /></LogoBubble>
          <SideToggle><ChevronRight size={16} strokeWidth={1.3} /></SideToggle>
          <VThumb />
          <HThumb />
        </Canvas>

        <Panel>
          <PanelTabs>
            <PanelTab $w={59}><TabFrame /></PanelTab>
            <PanelTab $w={59} $on><TabSpark /></PanelTab>
            <PanelTab $w={59}><TabFace /></PanelTab>
            <PanelTab $w={59}><TabFlower /></PanelTab>
            <PanelTab $w={60}><TabClock /></PanelTab>
          </PanelTabs>
          <PanelBody>
            <Heading $mt={10}>Font<More>More</More></Heading>
            <Row $h={27} $mt={10}>
              <Field $w={144} $pr={6}>Arial<Caret $c="#777" /></Field>
              <Field $w={46} $ml={6} $pr={6}>18<Caret $c="#777" /></Field>
              <BigA $w={34}>A<sup>+</sup></BigA>
              <BigA $w={36}>A<sup>-</sup></BigA>
            </Row>
            <FormatGrid $mt={12}>
              <FormatBtn $on><BoldB>B</BoldB></FormatBtn>
              <FormatBtn><Italic /></FormatBtn>
              <FormatBtn><Ico s={18}><path d="M7 3v9a5 5 0 0 0 10 0V3M5 21h14"/></Ico></FormatBtn>
              <FormatBtn><Ico s={18}><path d="M3 12h18M17 7c-1-3-9-4-10 0M7 17c1 3 9 4 10 0"/></Ico></FormatBtn>
              <FormatBtn><svg width="22" height="18" viewBox="0 0 22 18" fill="none"><path d="M2 12L8 1l6 11M4 8h8" stroke="#333" strokeWidth="1.400"/><rect x="1" y="14" width="14" height="3" fill="#7c0b12"/><path d="M17 7l2 2 2-2" stroke="#aaa"/></svg></FormatBtn>
              <FormatBtn><Highlighter /><Caret $ml={4} /></FormatBtn>
            </FormatGrid>
            <FormatGrid $mt={11}>
              <FormatBtn $on><AlignIco k="l" c="#23b384" /></FormatBtn>
              <FormatBtn><AlignIco k="c" /></FormatBtn>
              <FormatBtn><AlignIco k="r" /></FormatBtn>
              <FormatBtn><AlignIco k="j" /></FormatBtn>
              <FormatBtn><Script>X<sup>2</sup></Script></FormatBtn>
              <FormatBtn><Script>X<sub>2</sub></Script></FormatBtn>
            </FormatGrid>
            <Row $mt={11}>
              <span>Row Spacing</span>
              <RowSide $gap={9}><Field $w={46} $pr={6}>1<Caret $c="#777" /></Field>Kerning</RowSide>
              <Field $w={46} $pr={6}>1<Caret $c="#777" /></Field>
            </Row>
            <Rule $mt={9} />
            <Heading $mt={11}>Topic</Heading>
            <Row $mt={6}>
              <RowSide $gap={9}>Shape<Sel w={54}><svg width="20" height="14" fill="none" stroke="#333" strokeWidth="1.200"><rect x="1" y="1" width="18" height="12" rx="6"/></svg></Sel></RowSide>
              <RowSide $gap={9}>Corner<Sel w={54}><svg width="16" height="16" fill="none" stroke="#444" strokeWidth="1.200"><path d="M1 2h12v13"/></svg></Sel></RowSide>
            </Row>
            <Row $mt={9}>
              <RowSide><Box $on><Check size={11} strokeWidth={3} /></Box>Fill Color</RowSide>
              <RowSide $gap={9}><Sel w={54} pl={12}><Swatch $w={16} $h={8} $r={1} $c="#222" /></Sel><Sel w={87} pl={4}><Swatch $w={60} $h={20} $c="#00ad52" /></Sel></RowSide>
            </Row>
            <Row $mt={8}><RowSide><Box />Shadow</RowSide></Row>
            <Row $mt={8}><RowSide><Box />Customize Width</RowSide></Row>
            <Rule $mt={6} />
            <Heading $mt={12}>Border</Heading>
            <Row $mt={7}>
              <RowSide><Box $on><Check size={11} strokeWidth={3} /></Box>Border Color</RowSide>
              <Sel w={87} pl={4}><Swatch $w={60} $h={20} $c="#00ad52" /></Sel>
            </Row>
            <Row $mt={7}>
              <RowSide $gap={9}>Weight<Sel w={54}><LineSample $t={3} /></Sel></RowSide>
              <RowSide $gap={9}>Dashes<Sel w={54}><LineSample $t={1} /></Sel></RowSide>
            </Row>
            <Rule $mt={7} />
            <Heading $mt={12}>Layout</Heading>
            <Row $h={44} $mt={6}>Structure<Sel w={87} h={44} pl={8} pr={8}><Mini d={rightTree} s={44} vb="6 6 44 44" /></Sel></Row>
            <Row $h={18} $mt={13}>Topic Spacing</Row>
            <Row $mt={10}>
              <RowSide $gap={7}>Horizontal<Field $w={54} $h={24} $pr={6}>63<Spinner><SpinUp /><SpinDown /></Spinner></Field></RowSide>
              <RowSide $gap={8}>Vertical<Field $w={54} $h={24} $pr={6}>33<Spinner><SpinUp /><SpinDown /></Spinner></Field></RowSide>
            </Row>
            <Rule $mt={4} />
            <Heading $mt={12}>Branch</Heading>
            <Row $mt={7}>Connector Style<Sel w={54} pl={10}><svg width="22" height="18" fill="none" stroke="#bbb" strokeWidth="1.200"><path d="M0 9h20M20 2c-6 0-8 4-9 7 1 3 3 7 9 7" /><path d="M0 9h10" strokeWidth="3" /></svg></Sel></Row>
            <Row $mt={8}>
              <RowSide $gap={25}>Line<Sel w={54} pl={3} pr={6}><Swatch $w={28} $h={20} $r={5} $c="#444" /></Sel></RowSide>
              <RowSide $gap={9}>Topic<Sel w={54} pl={3} pr={6}><Swatch $w={28} $h={20} $r={5} $c="#fff" /></Sel></RowSide>
            </Row>
            <Row $mt={8}>
              <RowSide $gap={9}>Weight<Sel w={54}><LineSample $t={3} /></Sel></RowSide>
              <RowSide $gap={9}>Dashes<Sel w={54}><LineSample $t={1} /></Sel></RowSide>
            </Row>
            <Row $mt={8}>
              <RowSide $gap={14}>Arrow<Sel w={54}><LineSample $t={1.500} $c="#888" /></Sel></RowSide>
              <RowSide $gap={9}>Tapered<Sel w={54} pl={12}><svg width="16" height="16" fill="none" stroke="#555" strokeWidth="1.800"><path d="M2 15C3 8 8 3 15 2" /></svg></Sel></RowSide>
            </Row>
            <PreviewCard />
          </PanelBody>
          <PanelThumb />
        </Panel>
      </Main>

      <StatusBar>
        <StatusSlot $w={30}><Ico s={17}><rect x="6" y="5" width="12" height="14"/><path d="M2.500 5v14M21.500 5v14"/></Ico></StatusSlot>
        <StatusSep $ml={6} />
        <PageTab>Page-1<Caret $c="#777" /></PageTab>
        <StatusSep />
        <StatusSlot $w={54}><Plus size={15} strokeWidth={1.1} /></StatusSlot>
        <StatusSep />
        <ActivePage>Page-1</ActivePage>
        <StatusSep />
        <Push />
        <StatusText $w={80}>[Main Idea 101]</StatusText>
        <StatusSlot $w={28} $ml={11}><Ico s={16}><path d="M5 12V9a7 7 0 0 1 14 0v3z" fill="currentColor"/><path d="M5 12v3a7 7 0 0 0 14 0v-3"/></Ico></StatusSlot>
        <StatusSlot $w={26}><Ico s={17}><path d="M3 5h18v15H3zM9 5v15M15 5v15"/></Ico></StatusSlot>
        <StatusSlot $w={30}><CirclePlay size={16} strokeWidth={1.2} /></StatusSlot>
        <StatusSlot $w={28}><Ico s={17}><rect x="7" y="6" width="10" height="12"/><path d="M3 3h18v18H3z"/></Ico></StatusSlot>
        <StatusSlot $w={28}><Ico s={17}><rect x="3" y="3" width="18" height="18"/><path d="M7 8V7h1M16 7h1v1M7 16v1h1M17 16v1h-1"/></Ico></StatusSlot>
        <StatusSlot $w={20}><Minus size={13} strokeWidth={1.2} /></StatusSlot>
        <Slider><SliderTrack /><SliderFill /><SliderKnob /></Slider>
        <StatusSlot $w={22}><Plus size={13} strokeWidth={1.2} /></StatusSlot>
        <StatusText $w={30} $ml={3}>160%</StatusText>
        <StatusSlot $w={12}><Caret /></StatusSlot>
        <StatusSlot $w={28} $ml={16}><Ico s={17}><path d="M8 3H3v5M16 3h5v5M8 21H3v-5M16 21h5v-5"/></Ico></StatusSlot>
        <StatusSlot $w={28} $ml={7}><Ico s={17}><rect x="3" y="3" width="18" height="18"/><path d="M7 12h10M7 10l-2 2 2 2M17 10l2 2-2 2"/></Ico></StatusSlot>
      </StatusBar>
    </Page>
  );
}
